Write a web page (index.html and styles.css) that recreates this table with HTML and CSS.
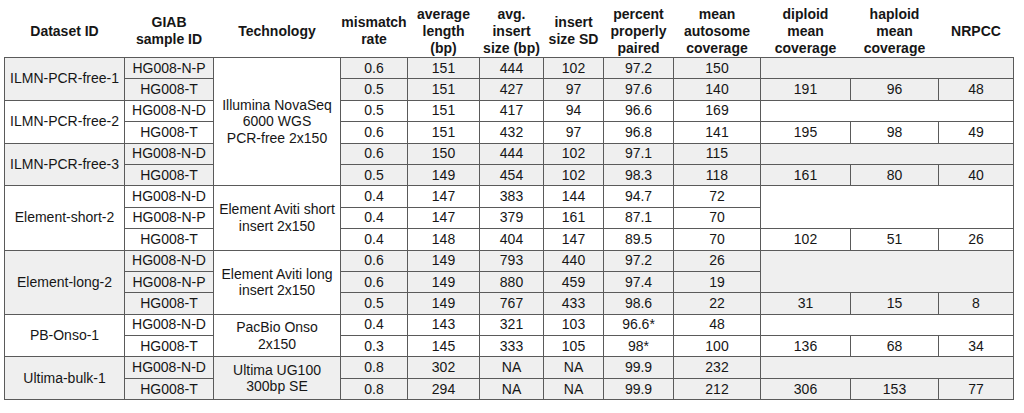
FILE: index.html
```html
<!DOCTYPE html>
<html>
<head>
<meta charset="utf-8">
<link rel="stylesheet" href="styles.css">
</head>
<body>
<table class="data">
  <colgroup>
    <col class="c1"><col class="c2"><col class="c3"><col class="c4"><col class="c5"><col class="c6"><col class="c7"><col class="c8"><col class="c9"><col class="c10"><col class="c11"><col class="c12">
  </colgroup>
  <thead>
    <tr>
      <th>Dataset ID</th>
      <th>GIAB<br>sample ID</th>
      <th>Technology</th>
      <th>mismatch<br>rate</th>
      <th>average<br>length<br>(bp)</th>
      <th>avg.<br>insert<br>size (bp)</th>
      <th>insert<br>size SD</th>
      <th>percent<br>properly<br>paired</th>
      <th>mean<br>autosome<br>coverage</th>
      <th>diploid<br>mean<br>coverage</th>
      <th>haploid<br>mean<br>coverage</th>
      <th>NRPCC</th>
    </tr>
  </thead>
  <tbody>
    <tr class="g">
      <td rowspan="2">ILMN-PCR-free-1</td><td>HG008-N-P</td>
      <td rowspan="6" class="w tech">Illumina NovaSeq<br>6000 WGS<br>PCR-free 2x150</td>
      <td>0.6</td><td>151</td><td>444</td><td>102</td><td>97.2</td><td>150</td><td colspan="3"></td>
    </tr>
    <tr class="g">
      <td>HG008-T</td><td>0.5</td><td>151</td><td>427</td><td>97</td><td>97.6</td><td>140</td><td>191</td><td>96</td><td>48</td>
    </tr>
    <tr>
      <td rowspan="2">ILMN-PCR-free-2</td><td>HG008-N-D</td>
      <td>0.5</td><td>151</td><td>417</td><td>94</td><td>96.6</td><td>169</td><td colspan="3"></td>
    </tr>
    <tr>
      <td>HG008-T</td><td>0.6</td><td>151</td><td>432</td><td>97</td><td>96.8</td><td>141</td><td>195</td><td>98</td><td>49</td>
    </tr>
    <tr class="g">
      <td rowspan="2">ILMN-PCR-free-3</td><td>HG008-N-D</td>
      <td>0.6</td><td>150</td><td>444</td><td>102</td><td>97.1</td><td>115</td><td colspan="3"></td>
    </tr>
    <tr class="g">
      <td>HG008-T</td><td>0.5</td><td>149</td><td>454</td><td>102</td><td>98.3</td><td>118</td><td>161</td><td>80</td><td>40</td>
    </tr>
    <tr>
      <td rowspan="3">Element-short-2</td><td>HG008-N-D</td>
      <td rowspan="3" class="w tech">Element Aviti short<br>insert 2x150</td>
      <td>0.4</td><td>147</td><td>383</td><td>144</td><td>94.7</td><td>72</td><td colspan="3" rowspan="2"></td>
    </tr>
    <tr>
      <td>HG008-N-P</td><td>0.4</td><td>147</td><td>379</td><td>161</td><td>87.1</td><td>70</td>
    </tr>
    <tr>
      <td>HG008-T</td><td>0.4</td><td>148</td><td>404</td><td>147</td><td>89.5</td><td>70</td><td>102</td><td>51</td><td>26</td>
    </tr>
    <tr class="g">
      <td rowspan="3">Element-long-2</td><td>HG008-N-D</td>
      <td rowspan="3" class="w tech">Element Aviti long<br>insert 2x150</td>
      <td>0.6</td><td>149</td><td>793</td><td>440</td><td>97.2</td><td>26</td><td colspan="3" rowspan="2"></td>
    </tr>
    <tr class="g">
      <td>HG008-N-P</td><td>0.6</td><td>149</td><td>880</td><td>459</td><td>97.4</td><td>19</td>
    </tr>
    <tr class="g">
      <td>HG008-T</td><td>0.5</td><td>149</td><td>767</td><td>433</td><td>98.6</td><td>22</td><td>31</td><td>15</td><td>8</td>
    </tr>
    <tr>
      <td rowspan="2">PB-Onso-1</td><td>HG008-N-D</td>
      <td rowspan="2" class="w tech">PacBio Onso<br>2x150</td>
      <td>0.4</td><td>143</td><td>321</td><td>103</td><td>96.6*</td><td>48</td><td colspan="3"></td>
    </tr>
    <tr>
      <td>HG008-T</td><td>0.3</td><td>145</td><td>333</td><td>105</td><td>98*</td><td>100</td><td>136</td><td>68</td><td>34</td>
    </tr>
    <tr class="g">
      <td rowspan="2">Ultima-bulk-1</td><td>HG008-N-D</td>
      <td rowspan="2" class="tech">Ultima UG100<br>300bp SE</td>
      <td>0.8</td><td>302</td><td>NA</td><td>NA</td><td>99.9</td><td>232</td><td colspan="3"></td>
    </tr>
    <tr class="g">
      <td>HG008-T</td><td>0.8</td><td>294</td><td>NA</td><td>NA</td><td>99.9</td><td>212</td><td>306</td><td>153</td><td>77</td>
    </tr>
  </tbody>
</table>
</body>
</html>
```
FILE: styles.css
```css
html, body {
  margin: 0;
  padding: 0;
  background: #ffffff;
}
body {
  padding-left: 4px;
  font-family: "Liberation Sans", Arial, sans-serif;
  color: #161616;
}
.data {
  border-collapse: collapse;
  table-layout: fixed;
  width: 1009px;
  font-size: 14px;
}
.c1 { width: 120px; }
.c2 { width: 89px; }
.c3 { width: 127px; }
.c4 { width: 67px; }
.c5 { width: 72px; }
.c6 { width: 64px; }
.c7 { width: 60px; }
.c8 { width: 70px; }
.c9 { width: 87px; }
.c10 { width: 90px; }
.c11 { width: 88px; }
.c12 { width: 75px; }
.data th {
  font-weight: bold;
  line-height: 17px;
  height: 57.5px;
  padding: 5px 0 0 0;
  box-sizing: border-box;
  vertical-align: middle;
  text-align: center;
  border: none;
}
.data td {
  border: 1px solid #5a5a5a;
  padding: 0;
  text-align: center;
  vertical-align: middle;
  line-height: 17px;
}
.data tbody tr {
  height: 21.4px;
}
.data tr.g td {
  background: #efefef;
}
.data tr td.w {
  background: #ffffff;
}
.data td.tech {
  line-height: 16.5px;
}
```
